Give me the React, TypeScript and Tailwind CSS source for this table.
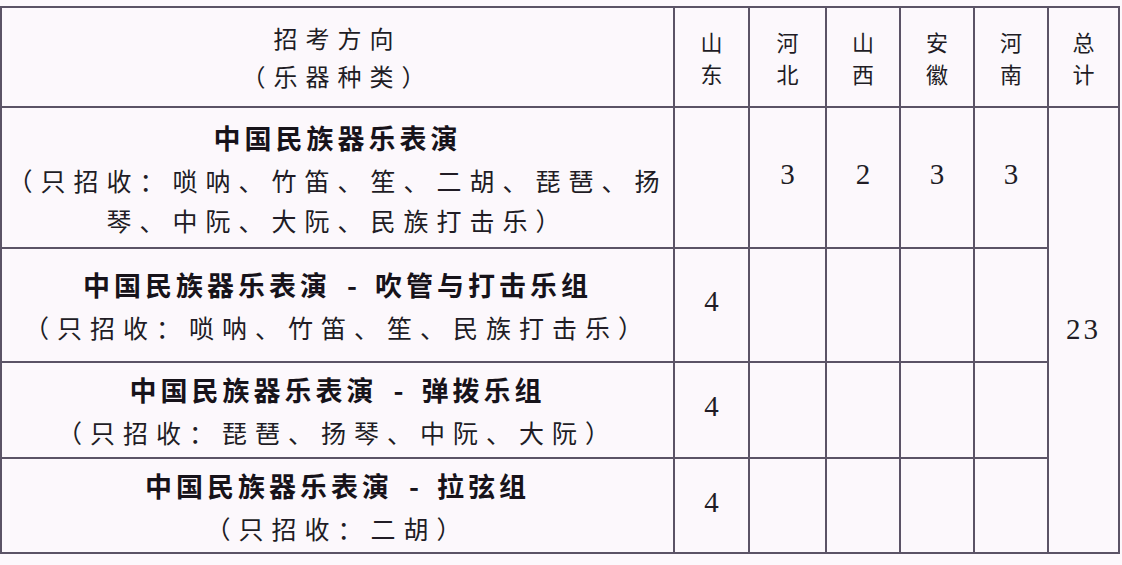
import React from "react"

const font = { fontFamily: '"Noto Sans CJK SC", "Noto Sans", sans-serif' }
const serif = { fontFamily: '"Liberation Serif", "Noto Sans CJK SC", serif' }

const provinces = [
  ["山", "东"],
  ["河", "北"],
  ["山", "西"],
  ["安", "徽"],
  ["河", "南"],
]

const colWidths = ["w-[673px]", "w-[75px]", "w-[77px]", "w-[74px]", "w-[74px]", "w-[74px]", "w-[71px]"]

const rows = [
  {
    title: "中国民族器乐表演",
    lines: ["（只招收：唢呐、竹笛、笙、二胡、琵琶、扬", "琴、中阮、大阮、民族打击乐）"],
    values: ["", "3", "2", "3", "3"],
    h: "h-[141px]",
  },
  {
    title: "中国民族器乐表演 - 吹管与打击乐组",
    lines: ["（只招收：唢呐、竹笛、笙、民族打击乐）"],
    values: ["4", "", "", "", ""],
    h: "h-[114px]",
  },
  {
    title: "中国民族器乐表演 - 弹拨乐组",
    lines: ["（只招收：琵琶、扬琴、中阮、大阮）"],
    values: ["4", "", "", "", ""],
    h: "h-[96px]",
  },
  {
    title: "中国民族器乐表演 - 拉弦组",
    lines: ["（只招收：二胡）"],
    values: ["4", "", "", "", ""],
    h: "h-[95px]",
  },
]

const cell = "border-2 border-[#5b5366] p-0 text-center align-middle"

function Title({ text }: { text: string }) {
  const [main, sub] = text.split(" - ")
  return (
    <div className="font-bold text-[27px] leading-[44px] tracking-[4px] text-[#17131a]">
      {main}
      {sub && (
        <>
          <span className="ml-[16px] mr-[14px]">-</span>
          {sub}
        </>
      )}
    </div>
  )
}

function Stack({ a, b }: { a: string; b: string }) {
  return (
    <div className="flex flex-col items-center text-[22px] leading-[32px]">
      <span>{a}</span>
      <span>{b}</span>
    </div>
  )
}

export default function App() {
  return (
    <div className="w-[1122px] h-[565px] bg-[#fcf8fc] pt-[6px] overflow-hidden" style={font}>
      <table className="border-collapse table-fixed w-[1118px] text-[#211c25]">
        <colgroup>
          {colWidths.map((w, i) => (
            <col key={i} className={w} />
          ))}
        </colgroup>
        <thead>
          <tr className="h-[100px]">
            <th className={`${cell} font-normal text-[24px] leading-[38px] tracking-[8px]`}>
              <div>招考方向</div>
              <div>（乐器种类）</div>
            </th>
            {provinces.map((p, i) => (
              <th key={i} className={`${cell} font-normal`}>
                <Stack a={p[0]} b={p[1]} />
              </th>
            ))}
            <th className={`${cell} font-normal`}>
              <Stack a="总" b="计" />
            </th>
          </tr>
        </thead>
        <tbody>
          {rows.map((r, i) => (
            <tr key={i} className={r.h}>
              <td className={cell}>
                <Title text={r.title} />
                {r.lines.map((l, j) => (
                  <div key={j} className="text-[25px] leading-[40px] tracking-[8px]">
                    {l}
                  </div>
                ))}
              </td>
              {r.values.map((v, j) => (
                <td key={j} className={`${cell} text-[29px] pb-[6px]`} style={serif}>
                  {v}
                </td>
              ))}
              {i === 0 && (
                <td rowSpan={4} className={`${cell} text-[29px] tracking-[3px]`} style={serif}>
                  23
                </td>
              )}
            </tr>
          ))}
        </tbody>
      </table>
    </div>
  )
}
